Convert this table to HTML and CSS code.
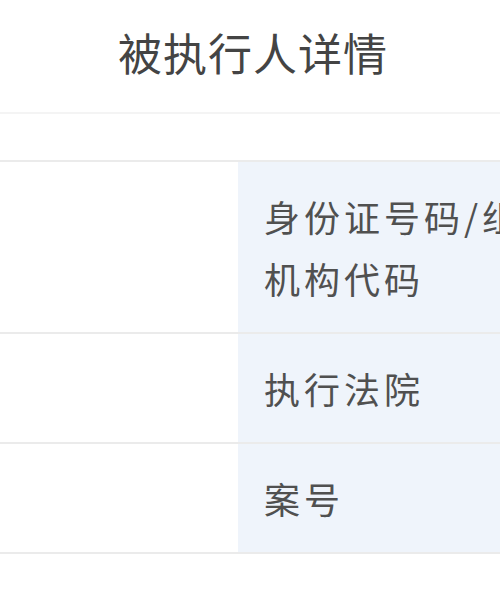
FILE: index.html
```html
<!DOCTYPE html>
<html lang="zh-CN">
<head>
    <meta charset="UTF-8">
    <meta name="viewport" content="width=device-width, initial-scale=1.0">
    <title>被执行人详情</title>
    <link rel="stylesheet" href="styles.css">
</head>
<body>

    <div class="page">
        <div class="header">
            <h1>被执行人详情</h1>
        </div>

        <div class="detail">
            <div class="row">
                <div class="value"></div>
                <div class="label">身份证号码/组织机构代码</div>
            </div>
            <div class="row">
                <div class="value"></div>
                <div class="label">执行法院</div>
            </div>
            <div class="row">
                <div class="value"></div>
                <div class="label">案号</div>
            </div>
        </div>
    </div>

</body>
</html>
```

FILE: styles.css
```css
body {
    margin: 0;
    background-color: #ffffff;
    font-family: "Noto Sans CJK SC", "Microsoft YaHei", sans-serif;
    overflow: hidden;
}
.page {
    width: 500px;
    overflow: hidden;
}
.header {
    height: 104px;
    padding-bottom: 8px;
    border-bottom: 2px solid #f4f4f4;
    display: flex;
    justify-content: center;
    align-items: center;
}
h1 {
    margin: 0;
    padding-left: 6px;
    font-size: 44px;
    font-weight: normal;
    letter-spacing: 1px;
    color: #444444;
}
.detail {
    margin-top: 46px;
    width: 580px;
    border-top: 2px solid #ebebeb;
}
.row {
    display: flex;
    border-bottom: 2px solid #ebebeb;
}
.value {
    width: 238px;
    flex-shrink: 0;
}
.label {
    width: 300px;
    flex-grow: 1;
    background-color: #eff4fb;
    padding: 23px 0 23px 26px;
    font-size: 36px;
    line-height: 62px;
    letter-spacing: 4px;
    color: #505050;
}
```
